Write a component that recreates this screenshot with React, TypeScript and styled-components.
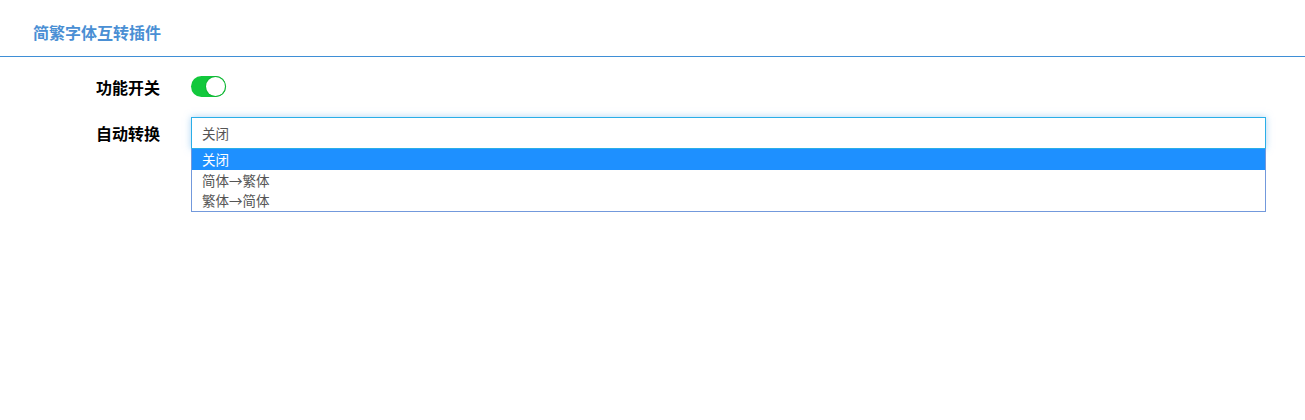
import React, { useState } from "react";
import styled, { createGlobalStyle } from "styled-components";

const Global = createGlobalStyle`
  html, body { margin: 0; padding: 0; background: #fff; }
  body { font-family: "Noto Sans CJK SC", "Noto Sans", sans-serif; }
  * { box-sizing: border-box; }
`;

const Page = styled.div`
  width: 100%;
  min-height: 420px;
  background: #fff;
`;

const Header = styled.header`
  height: 57px;
  display: flex;
  align-items: center;
  padding: 7px 0 0 33px;
  border-bottom: 1px solid #3f8fd6;
`;

const Title = styled.h1`
  margin: 0;
  font-size: 16px;
  font-weight: 700;
  color: #4a8fd4;
  letter-spacing: 0;
`;

const Form = styled.div`
  display: flex;
  flex-direction: column;
  gap: 20px;
  padding: 19px 39px 0 0;
`;

const Row = styled.div<{ $h: number }>`
  display: grid;
  grid-template-columns: 160px 1fr;
  column-gap: 31px;
  align-items: center;
  min-height: ${(p) => p.$h}px;
`;

const Label = styled.label`
  text-align: right;
  font-size: 16px;
  font-weight: 700;
  color: #000;
  line-height: 20px;
`;

const Switch = styled.button<{ $on: boolean }>`
  position: relative;
  width: 35px;
  height: 21px;
  padding: 0;
  border: none;
  border-radius: 11px;
  background: ${(p) => (p.$on ? "#12c83c" : "#ccc")};
  cursor: pointer;
  display: flex;
  align-items: center;
  justify-content: ${(p) => (p.$on ? "flex-end" : "flex-start")};
`;

const Knob = styled.span`
  width: 19px;
  height: 19px;
  margin: 0 1px;
  border-radius: 50%;
  background: #fff;
  box-shadow: 0 0 0 1px #0fb533;
`;

const SelectWrap = styled.div`
  position: relative;
`;

const SelectBox = styled.div`
  height: 32px;
  border: 1px solid #2aaee8;
  box-shadow: 0 0 7px rgba(102, 175, 233, 0.55);
  display: flex;
  align-items: center;
  padding-left: 10px;
  font-size: 13.5px;
  color: #555;
  background: #fff;
`;

const Menu = styled.ul`
  position: absolute;
  left: 0;
  right: 0;
  top: 31px;
  margin: 0;
  padding: 0;
  list-style: none;
  background: #fff;
  border: 1px solid #7399dc;
  border-top-color: #2aaee8;
`;

const Option = styled.li<{ $active: boolean }>`
  height: 20.5px;
  line-height: 20.5px;
  padding-left: 10px;
  font-size: 13.5px;
  color: ${(p) => (p.$active ? "#fff" : "#555")};
  background: ${(p) => (p.$active ? "#1e90ff" : "#fff")};
`;

const options = ["关闭", "简体→繁体", "繁体→简体"];

export default function App() {
  const [on, setOn] = useState(true);
  const [sel] = useState(0);
  return (
    <Page>
      <Global />
      <Header>
        <Title>简繁字体互转插件</Title>
      </Header>
      <Form>
        <Row $h={21}>
          <Label>功能开关</Label>
          <div>
            <Switch $on={on} onClick={() => setOn(!on)} aria-label="功能开关">
              <Knob />
            </Switch>
          </div>
        </Row>
        <Row $h={32}>
          <Label>自动转换</Label>
          <SelectWrap>
            <SelectBox>{options[sel]}</SelectBox>
            <Menu>
              {options.map((o, i) => (
                <Option key={o} $active={i === sel}>
                  {o}
                </Option>
              ))}
            </Menu>
          </SelectWrap>
        </Row>
      </Form>
    </Page>
  );
}
